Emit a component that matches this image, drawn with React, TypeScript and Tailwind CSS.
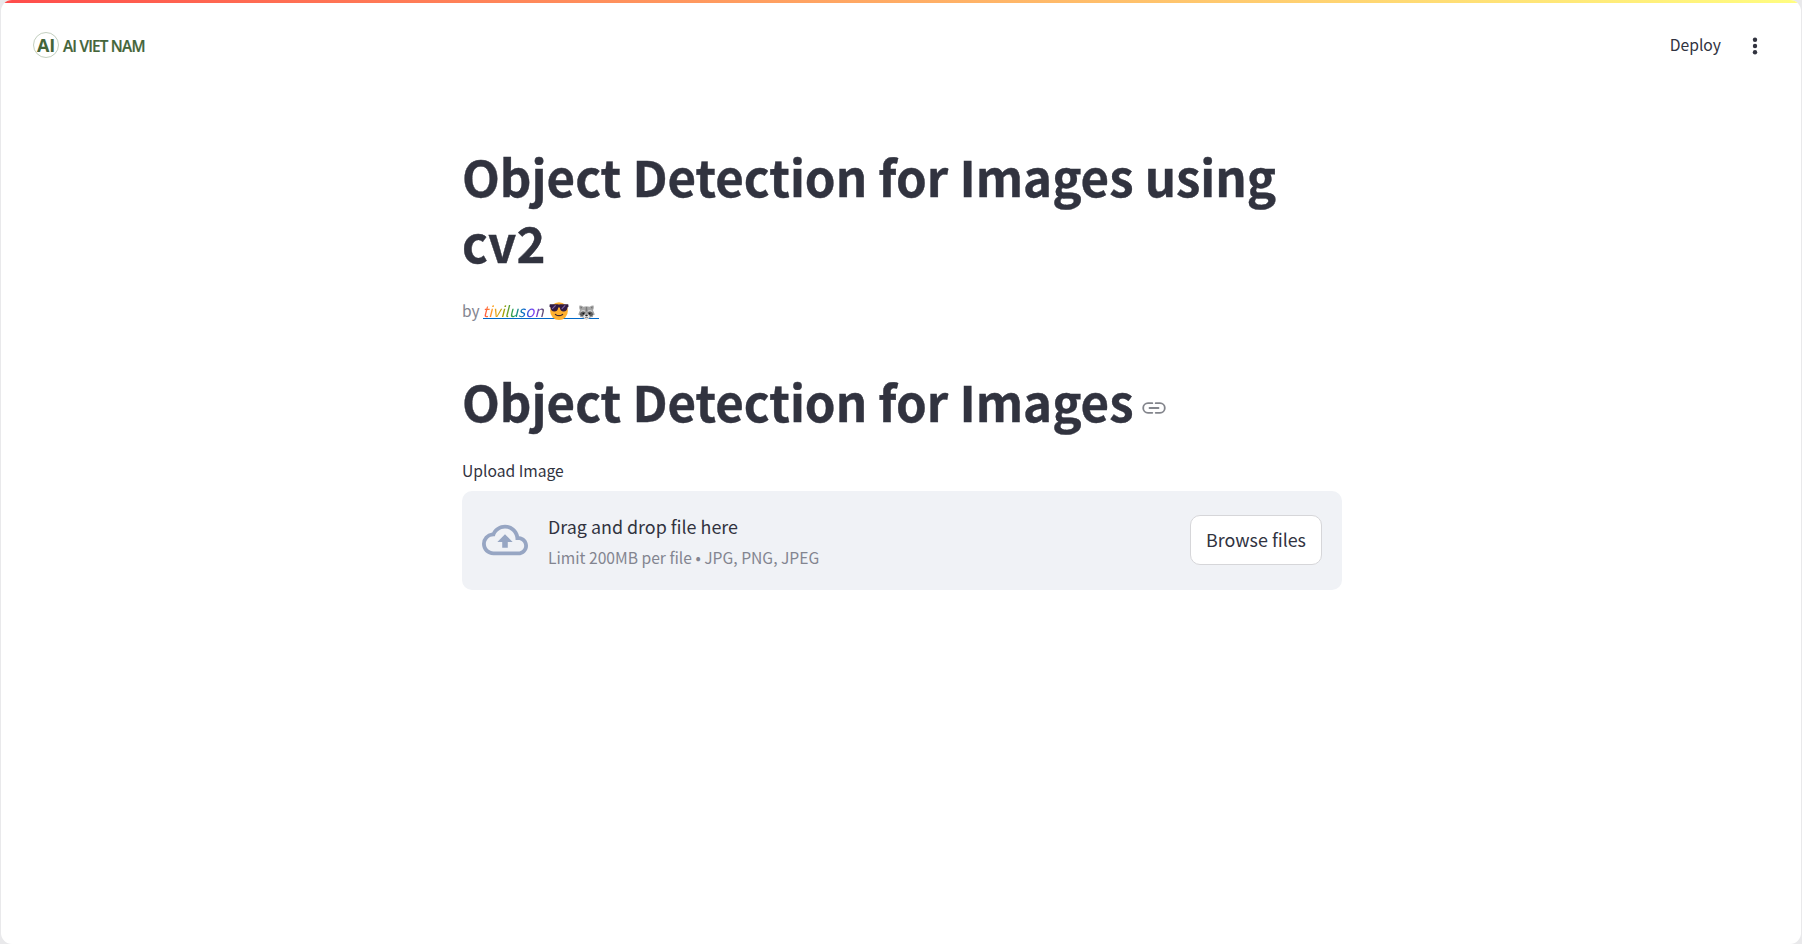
import React from "react";

const FONT = "font-['Noto_Sans_CJK_JP','Noto_Sans',sans-serif]";
const HEADING = "text-[49.2px] leading-[66px] font-bold [-webkit-text-stroke:0.4px_#31333f]";

function SunglassesFace() {
  return (
    <svg viewBox="0 0 20 18" className="block h-[18px] w-[20px]" aria-hidden="true">
      <circle cx="10" cy="9.1" r="8.9" fill="#ffb02e" />
      <path d="M6.4 12.4q3.6 2.6 7.2 0" fill="none" stroke="#402a32" strokeWidth="1.2" strokeLinecap="round" />
      <path d="M.8 2.2h8q1.2.7 2.4 0h8l.4 2.3-1.1 1q-.4 3.9-3.9 3.9-3.4 0-3.8-4h-1.6q-.4 4-3.8 4-3.5 0-3.9-3.9l-1.1-1z" fill="#321b41" />
      <path d="m3.2 6.8 3.4-3.4M12.8 6.8l3.4-3.4" stroke="#8065a8" strokeWidth="1.1" />
    </svg>
  );
}

function Raccoon() {
  return (
    <svg viewBox="0 0 17 15" className="block h-[15px] w-[17px]" aria-hidden="true">
      <path d="M1.5.4Q3.5.2 5.3 1.7Q8.5.8 11.7 1.7Q13.5.2 15.5.4 16.3 3 15 5.2L16.8 9.6 15 10.4 15 12 12.8 12.3Q8.5 16.5 4.2 12.3L2 12 2 10.4.2 9.6 2 5.2Q.7 3 1.5.4z" fill="#a6a6a6" />
      <path d="M2.4 1.5 4.2 2.5 2.8 4.1zM14.6 1.5 12.8 2.5 14.2 4.1z" fill="#6e6e6e" />
      <path d="M7.9 2h1.2l.4 4.5h-2z" fill="#7a7a7a" />
      <path d="M2.6 7.8Q4.6 5.7 7.4 7.2L6.6 10 4 11.4 1.8 9.8zM14.4 7.8Q12.4 5.7 9.6 7.2L10.4 10 13 11.4 15.2 9.8z" fill="#5c5c5c" />
      <path d="M2.8 6.4Q4.8 4.8 7.2 6.1M14.2 6.4Q12.2 4.8 9.8 6.1" fill="none" stroke="#dcdcdc" strokeWidth=".9" />
      <ellipse cx="8.5" cy="11.6" rx="3.1" ry="2.4" fill="#e6e6e6" />
      <ellipse cx="8.5" cy="10.3" rx="1.3" ry=".9" fill="#222" />
      <path d="M7.2 12.7q1.3-.8 2.6 0" fill="none" stroke="#444" strokeWidth=".7" />
      <circle cx="5.3" cy="8.6" r=".8" fill="#111" />
      <circle cx="11.7" cy="8.6" r=".8" fill="#111" />
    </svg>
  );
}

function Logo() {
  return (
    <div className="flex items-center font-['Open_Sans',sans-serif] text-[#44653a]">
      <div className="flex size-[26px] items-center justify-center rounded-full border border-[#c3cfbf]">
        <span className="text-[18px] leading-[25px] font-bold tracking-[-0.3px]">AI</span>
      </div>
      <span className="mt-px ml-[4px] text-[15.3px] leading-[24px] font-semibold tracking-[-0.78px] whitespace-nowrap [-webkit-text-stroke:0.2px_#44653a]">
        AI VIET NAM
      </span>
    </div>
  );
}

function Header() {
  return (
    <header className="flex h-[84px] items-center justify-between pr-[36px] pl-[32px]">
      <Logo />
      <div className="flex items-center">
        <span className="text-[15.7px] leading-6 whitespace-nowrap">Deploy</span>
        <svg viewBox="0 0 20 20" className="mt-px ml-[24px] size-[20px]" fill="#31333f" aria-hidden="true">
          <circle cx="10" cy="3.7" r="2.2" />
          <circle cx="10" cy="10" r="2.2" />
          <circle cx="10" cy="16.3" r="2.2" />
        </svg>
      </div>
    </header>
  );
}

function Uploader() {
  return (
    <section className="mt-[8px] flex h-[98.5px] items-center rounded-[10px] bg-[#f0f2f6] px-5">
      <svg viewBox="0 0 24 24" className="size-[46px]" fill="#97a6c3" aria-hidden="true">
        <path d="M19.35 10.04A7.49 7.49 0 0 0 12 4C9.11 4 6.6 5.64 5.35 8.04A5.994 5.994 0 0 0 0 14c0 3.31 2.69 6 6 6h13c2.76 0 5-2.24 5-5 0-2.64-2.05-4.78-4.65-4.96zM19 18H6c-2.21 0-4-1.79-4-4s1.79-4 4-4h.71C7.37 7.69 9.48 6 12 6c3.04 0 5.5 2.46 5.5 5.5v.5H19c1.66 0 3 1.34 3 3s-1.34 3-3 3zM8 13h2.55v3h2.9v-3H16l-4-4z" />
      </svg>
      <div className="ml-5 flex flex-col whitespace-nowrap">
        <span className="text-[17.9px] leading-[31px]">Drag and drop file here</span>
        <span className="mt-[4px] text-[15.65px] leading-6 text-[#838590]">Limit 200MB per file • JPG, PNG, JPEG</span>
      </div>
      <button className="ml-auto h-[50px] w-[132px] rounded-[10px] border border-[#d6d6d9] bg-white pb-[2px] text-[17.9px] leading-8 whitespace-nowrap">
        Browse files
      </button>
    </section>
  );
}

export default function App() {
  return (
    <div className="h-[944px] w-[1802px] overflow-hidden bg-[#e9e9eb]">
      <div className={`ml-px h-[944px] w-[1800px] overflow-hidden rounded-[11px] bg-white text-[#31333f] ${FONT}`}>
        <div className="h-[3px] bg-linear-to-r from-[#ff4b4b] to-[#fffd80]" />
        <Header />
        <main className="ml-[461px] flex w-[880px] flex-col pt-[56px]">
          <h1 className={HEADING}>Object Detection for Images using cv2</h1>
          <div className="mt-[22px] flex h-[26px] text-[15.5px] leading-[26px] whitespace-nowrap">
            <span className="text-[#838590]">by</span>
            <a className="ml-[3px] flex h-[22px] w-[116px] items-start border-b border-[#0068c9]">
              <span className="bg-[linear-gradient(to_right,#ff4b4b,#ffa421,#a8a000,#21a05a,#0068c9,#803df5,#5a4a66)] bg-clip-text text-[15.2px] text-transparent italic">
                tiviluson
              </span>
              <span className="mt-[5px] ml-[5.5px]"><SunglassesFace /></span>
              <span className="mt-[8px] ml-[9px]"><Raccoon /></span>
            </a>
          </div>
          <div className="mt-[45px] flex items-center">
            <h1 className={`${HEADING} whitespace-nowrap`}>Object Detection for Images</h1>
            <svg viewBox="0 0 24 12" className="mt-[14px] ml-[8px] h-[12px] w-[24px]" fill="none" stroke="#83858c" strokeWidth="1.8" aria-hidden="true">
              <path d="M10.3 1.2H6a4.8 4.8 0 0 0 0 9.6h4.3M13.7 1.2H18a4.8 4.8 0 0 1 0 9.6h-4.3M7.5 6h9" strokeLinecap="round" />
            </svg>
          </div>
          <span className="mt-[25px] text-[15.65px] leading-6">Upload Image</span>
          <Uploader />
        </main>
      </div>
    </div>
  );
}
